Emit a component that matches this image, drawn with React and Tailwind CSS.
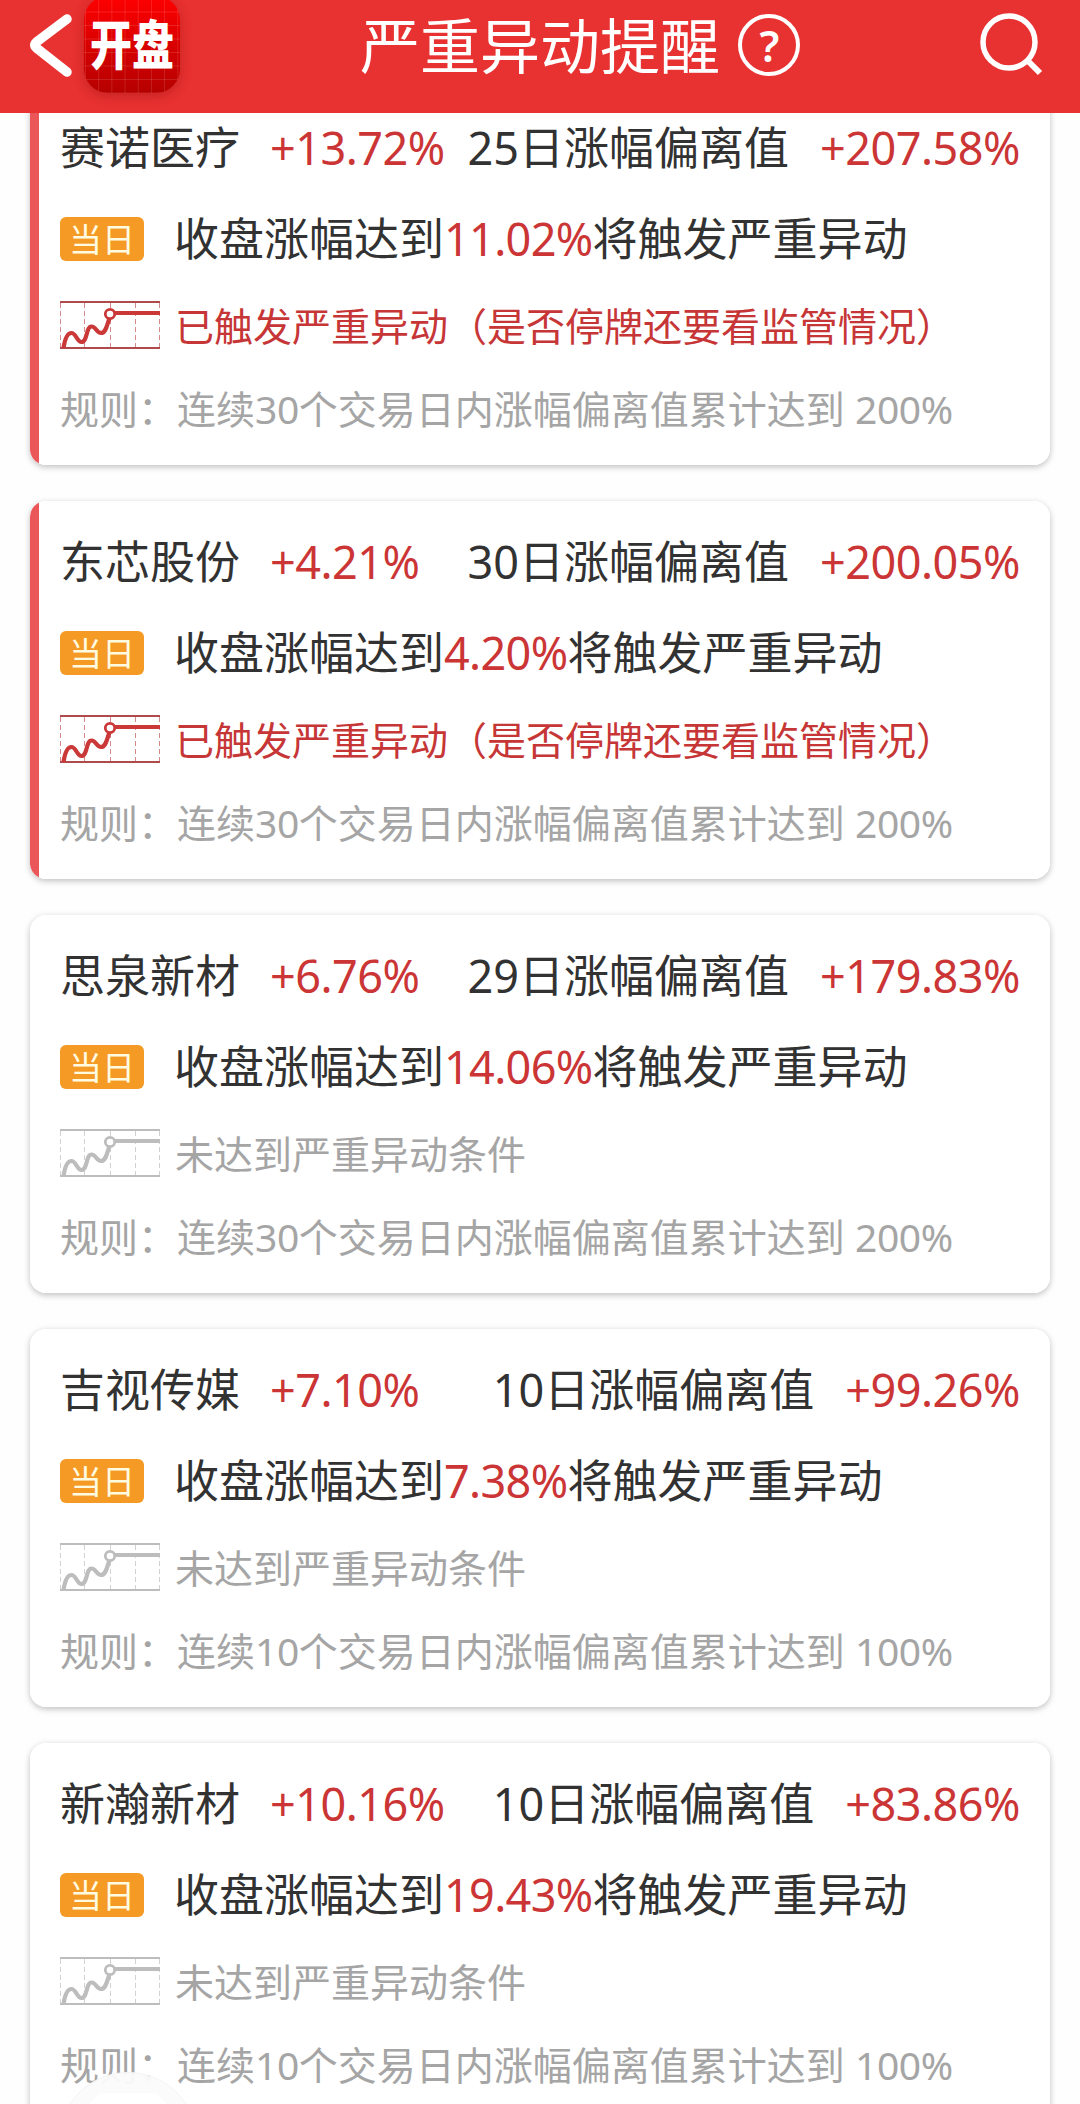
import { clsx } from 'clsx';

const stocks = [
  { name: '赛诺医疗', change: '+13.72%', days: 25, deviation: '+207.58%', trigger: '11.02%', triggered: true, ruleDays: 30, limit: '200%' },
  { name: '东芯股份', change: '+4.21%', days: 30, deviation: '+200.05%', trigger: '4.20%', triggered: true, ruleDays: 30, limit: '200%' },
  { name: '思泉新材', change: '+6.76%', days: 29, deviation: '+179.83%', trigger: '14.06%', triggered: false, ruleDays: 30, limit: '200%' },
  { name: '吉视传媒', change: '+7.10%', days: 10, deviation: '+99.26%', trigger: '7.38%', triggered: false, ruleDays: 10, limit: '100%' },
  { name: '新瀚新材', change: '+10.16%', days: 10, deviation: '+83.86%', trigger: '19.43%', triggered: false, ruleDays: 10, limit: '100%' },
];

function TrendIcon({ active }) {
  const line = active ? '#cb3838' : '#bdbdbd';
  const frame = active ? '#ae4a4c' : '#bdbdbd';
  const dash = active ? '#d48a8a' : '#d2d2d2';

  return (
    <svg width="100" height="48" viewBox="0 0 100 48" fill="none" className="mb-[2px] shrink-0">
      <path d="M.5 2v44M24.5 2v44M50.5 2v44M75.5 2v44M99.5 2v44" stroke={dash} strokeDasharray="5 3" />
      <path d="M0 1h100M0 47h100" stroke={frame} strokeWidth="2" />
      <path
        d="M3.5 47C5 37 8 32 11.500 32C16 32 17 41 21.500 41C27.500 41 26 25.500 31.500 25.500C36 25.500 36.500 32 41 32C46 32 47 24 49.500 17"
        stroke={line}
        strokeWidth="4.200"
      />
      <path d="M55 12h45" stroke={line} strokeWidth="4" />
      <circle cx="50" cy="13" r="4.700" fill="#fff" stroke={line} strokeWidth="2.800" />
    </svg>
  );
}

function StockCard({ stock }) {
  return (
    <section className="relative h-[378px] shrink-0 overflow-hidden rounded-2xl bg-white px-[30px] pt-[31px] text-[45px] leading-[60px] text-[#323232]">
      {stock.triggered && <span className="absolute inset-y-0 left-0 w-[9px] bg-[#eb5659]" />}

      <div className="flex h-[60px] items-center whitespace-nowrap">
        <span>{stock.name}</span>
        <span className="ml-[30px] tracking-[-0.5px] text-[#cb3535]">{stock.change}</span>
        <span className="ml-auto">{stock.days}日涨幅偏离值</span>
        <span className="ml-[31px] tracking-[-0.5px] text-[#cb3535]">{stock.deviation}</span>
      </div>

      <div className="mt-[31px] flex h-[60px] items-center whitespace-nowrap">
        <span className="flex h-11 w-[84px] items-center justify-center rounded-md bg-[#f59a24] text-[33px] leading-none text-[#fffbe0]">
          当日
        </span>
        <span className="ml-[30px]">
          收盘涨幅达到
          <span className="tracking-[-0.65px] text-[#cb3535]">{stock.trigger}</span>
          将触发严重异动
        </span>
      </div>

      <div
        className={clsx(
          'mt-[27px] flex h-[60px] items-center whitespace-nowrap text-[39px]',
          stock.triggered ? 'text-[#c73636]' : 'text-[#a5a5a5]'
        )}
      >
        <TrendIcon active={stock.triggered} />
        <span className="ml-[15px]">
          {stock.triggered ? '已触发严重异动（是否停牌还要看监管情况）' : '未达到严重异动条件'}
        </span>
      </div>

      <div className="mt-[23px] h-[60px] whitespace-nowrap text-[39px] text-[#a5a5a5]">
        规则：连续<span className="tracking-[-0.4px]">{stock.ruleDays}</span>
        个交易日内涨幅偏离值累计达到 <span className="tracking-[-0.4px]">{stock.limit}</span>
      </div>
    </section>
  );
}

function Header() {
  return (
    <header className="relative z-10 flex h-[113px] shrink-0 bg-[#e83131] text-white">
      <svg width="84" height="92" viewBox="0 0 84 92" fill="none" className="shrink-0">
        <path d="M67 19L36.500 42Q33 45 36.500 48L67 72" stroke="#fff" strokeWidth="9.500" strokeLinecap="round" />
      </svg>

      {/* App logo */}
      <div className="-mt-1 flex h-[97px] w-24 shrink-0 items-center justify-center overflow-hidden rounded-3xl bg-linear-to-b from-[#ff0000] to-[#b50000] shadow-[0_3px_12px_rgba(120,0,0,0.3)]">
        <div className="flex size-full items-center justify-center bg-[linear-gradient(#ffffff20_1px,transparent_1px),linear-gradient(90deg,#ffffff20_1px,transparent_1px)] bg-[size:13.200px_13.500px] bg-[position:1px_2px]">
          <span className="scale-y-[1.260] text-[42px] leading-none font-black">开盘</span>
        </div>
      </div>

      <h1 className="mt-[1px] ml-[180px] h-[90px] text-[60px] leading-[90px]">严重异动提醒</h1>
      <span className="mt-[14px] ml-[18px] flex size-[62px] items-center justify-center rounded-full border-4 border-white pl-[1px] text-[43px] leading-none font-semibold">
        ?
      </span>
      <svg width="70" height="90" viewBox="0 0 70 90" fill="none" className="mr-[34px] ml-auto">
        <circle cx="33" cy="42" r="26" stroke="#fff" strokeWidth="5.500" />
        <path d="M51 60L64 73" stroke="#fff" strokeWidth="6" />
      </svg>
    </header>
  );
}

export default function App() {
  return (
    <div className="relative flex h-[2104px] w-[1080px] flex-col overflow-hidden bg-[#fefefe] font-['Noto_Sans','Noto_Sans_CJK_SC',sans-serif]">
      <Header />
      <main className="-mt-[26px] flex flex-col gap-9 px-[30px]">
        {stocks.map((stock) => (
          <div key={stock.name} className="rounded-2xl shadow-[0_2px_6px_rgba(0,0,0,0.25)]">
            <StockCard stock={stock} />
          </div>
        ))}
      </main>

      {/* Floating button, cut off by the bottom edge */}
      <div className="absolute top-[2072px] left-[58px] size-[140px] rounded-full border border-[#f4f4f4] bg-[#fbfbfb]/95">
        <svg viewBox="0 0 138 138" className="size-full">
          <path d="M41 20h56l21 21v56l-21 21H41L20 97V41z" fill="#fff" />
        </svg>
      </div>
    </div>
  );
}
